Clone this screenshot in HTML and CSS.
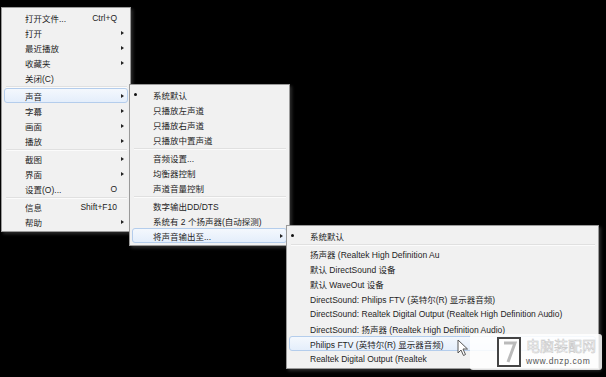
FILE: index.html
```html
<!DOCTYPE html>
<html lang="zh-cn">
<head>
    <meta charset="UTF-8">
    <meta name="viewport" content="width=device-width, initial-scale=1.0">
    <title>声音输出菜单</title>
    <link rel="stylesheet" href="styles.css">
</head>
<body>
    <div class="tela">
        <!-- menu principal -->
        <div class="menu menu-main">
            <div class="item"><span class="check"></span><span class="label">打开文件...</span><span class="key">Ctrl+Q</span><span class="arrow"></span></div>
            <div class="item sub"><span class="check"></span><span class="label">打开</span><span class="arrow"></span></div>
            <div class="item sub"><span class="check"></span><span class="label">最近播放</span><span class="arrow"></span></div>
            <div class="item sub"><span class="check"></span><span class="label">收藏夹</span><span class="arrow"></span></div>
            <div class="item"><span class="check"></span><span class="label">关闭(C)</span><span class="arrow"></span></div>
            <div class="sep"></div>
            <div class="item sub active"><span class="check"></span><span class="label">声音</span><span class="arrow"></span></div>
            <div class="item sub"><span class="check"></span><span class="label">字幕</span><span class="arrow"></span></div>
            <div class="item sub"><span class="check"></span><span class="label">画面</span><span class="arrow"></span></div>
            <div class="item sub"><span class="check"></span><span class="label">播放</span><span class="arrow"></span></div>
            <div class="sep"></div>
            <div class="item sub"><span class="check"></span><span class="label">截图</span><span class="arrow"></span></div>
            <div class="item sub"><span class="check"></span><span class="label">界面</span><span class="arrow"></span></div>
            <div class="item"><span class="check"></span><span class="label">设置(O)...</span><span class="key">O</span><span class="arrow"></span></div>
            <div class="sep"></div>
            <div class="item"><span class="check"></span><span class="label">信息</span><span class="key">Shift+F10</span><span class="arrow"></span></div>
            <div class="item sub"><span class="check"></span><span class="label">帮助</span><span class="arrow"></span></div>
        </div>

        <!-- submenu som -->
        <div class="menu menu-som">
            <div class="item checked"><span class="check"></span><span class="label">系统默认</span><span class="arrow"></span></div>
            <div class="item"><span class="check"></span><span class="label">只播放左声道</span><span class="arrow"></span></div>
            <div class="item"><span class="check"></span><span class="label">只播放右声道</span><span class="arrow"></span></div>
            <div class="item"><span class="check"></span><span class="label">只播放中置声道</span><span class="arrow"></span></div>
            <div class="sep"></div>
            <div class="item"><span class="check"></span><span class="label">音频设置...</span><span class="arrow"></span></div>
            <div class="item"><span class="check"></span><span class="label">均衡器控制</span><span class="arrow"></span></div>
            <div class="item"><span class="check"></span><span class="label">声道音量控制</span><span class="arrow"></span></div>
            <div class="sep"></div>
            <div class="item"><span class="check"></span><span class="label">数字输出DD/DTS</span><span class="arrow"></span></div>
            <div class="item"><span class="check"></span><span class="label">系统有 2 个扬声器(自动探测)</span><span class="arrow"></span></div>
            <div class="item sub active"><span class="check"></span><span class="label">将声音输出至...</span><span class="arrow"></span></div>
        </div>

        <!-- submenu saida -->
        <div class="menu menu-saida">
            <div class="item checked"><span class="check"></span><span class="label">系统默认</span><span class="arrow"></span></div>
            <div class="sep"></div>
            <div class="item"><span class="check"></span><span class="label">扬声器 (Realtek High Definition Au</span><span class="arrow"></span></div>
            <div class="item"><span class="check"></span><span class="label">默认 DirectSound 设备</span><span class="arrow"></span></div>
            <div class="item"><span class="check"></span><span class="label">默认 WaveOut 设备</span><span class="arrow"></span></div>
            <div class="item"><span class="check"></span><span class="label">DirectSound: Philips FTV (英特尔(R) 显示器音频)</span><span class="arrow"></span></div>
            <div class="item"><span class="check"></span><span class="label">DirectSound: Realtek Digital Output (Realtek High Definition Audio)</span><span class="arrow"></span></div>
            <div class="item"><span class="check"></span><span class="label">DirectSound: 扬声器 (Realtek High Definition Audio)</span><span class="arrow"></span></div>
            <div class="item active"><span class="check"></span><span class="label">Philips FTV (英特尔(R) 显示器音频)</span><span class="arrow"></span></div>
            <div class="item"><span class="check"></span><span class="label">Realtek Digital Output (Realtek</span><span class="arrow"></span></div>
        </div>

        <svg class="cursor" width="12" height="18" viewBox="0 0 12 18">
            <path d="M1 1 L1 14 L4 11 L6.5 16.5 L8.5 15.5 L6 10 L10.5 10 Z" fill="#fff" stroke="#555" stroke-width="1" stroke-linejoin="round"/>
        </svg>

        <div class="marca">
            <div class="logo">
                <svg width="24" height="30" viewBox="0 0 24 30">
                    <rect x="1" y="1" width="22" height="28" fill="#fff" stroke="#444" stroke-width="2"/>
                    <path d="M7 6 H18 L11 25" fill="none" stroke="#bbb" stroke-width="3"/>
                </svg>
            </div>
            <div class="marca-texto">
                <span class="marca-nome">电脑装配网</span>
                <span class="marca-url">www.dnzp.com</span>
            </div>
        </div>
    </div>
</body>
</html>
```

FILE: styles.css
```css
*{
    margin: 0px;
    padding: 0px;
    box-sizing: border-box;
}
body{
    background-color: #000;
    font-family: "Liberation Sans", "Noto Sans CJK SC", sans-serif;
    font-size: 8.5px;
    color: #1e1e1e;
    width: 606px;
    height: 377px;
    overflow: hidden;
}
.tela{
    position: relative;
    width: 606px;
    height: 377px;
}
.menu{
    position: absolute;
    display: flex;
    flex-direction: column;
    padding: 2px;
    background-color: #f1f1f1;
    border: 1px solid #9a9a9a;
    box-shadow: 2px 2px 3px rgba(120, 120, 120, 0.35);
}
.menu-main{
    left: 1px;
    top: 7px;
    width: 130px;
}
.menu-som{
    left: 129px;
    top: 84px;
    width: 161px;
}
.menu-saida{
    left: 286px;
    top: 225px;
    width: 313px;
}
.item{
    display: flex;
    align-items: center;
    height: 15px;
    border: 1px solid transparent;
    border-radius: 3px;
    white-space: nowrap;
}
.item.active{
    border-color: #b4cdec;
    background: linear-gradient(#f4f8fd, #e4eefb);
}
.check{
    width: 20px;
    flex: none;
    display: flex;
    align-items: center;
}
.checked .check::before{
    content: "";
    width: 3px;
    height: 3px;
    margin-left: 1px;
    border-radius: 50%;
    background-color: #111;
}
.label{
    flex: 1;
    overflow: hidden;
}
.key{
    flex: none;
}
.arrow{
    width: 10px;
    flex: none;
    display: flex;
    justify-content: flex-end;
    padding-right: 3px;
}
.sub .arrow::before{
    content: "";
    border-left: 3px solid #222;
    border-top: 2.5px solid transparent;
    border-bottom: 2.5px solid transparent;
}
.sep{
    height: 2px;
    margin: 1px 1px 0 2px;
    border-top: 1px solid #e0e0e0;
    border-bottom: 1px solid #fbfbfb;
}
.cursor{
    position: absolute;
    left: 457px;
    top: 339px;
}
.marca{
    position: absolute;
    left: 470px;
    top: 334px;
    width: 132px;
    height: 36px;
    display: flex;
    align-items: center;
    gap: 5px;
    padding-left: 27px;
    background-color: rgba(255, 255, 255, 0.85);
    border-radius: 3px;
    white-space: nowrap;
}
.logo{
    display: flex;
    flex: none;
}
.marca-texto{
    display: flex;
    flex-direction: column;
    gap: 1px;
}
.marca-nome{
    font-size: 14px;
    line-height: 17px;
    color: #fff;
    -webkit-text-stroke: 0.5px #c4c4c4;
}
.marca-url{
    font-size: 8.5px;
    color: #555;
    letter-spacing: 0.6px;
}
```
